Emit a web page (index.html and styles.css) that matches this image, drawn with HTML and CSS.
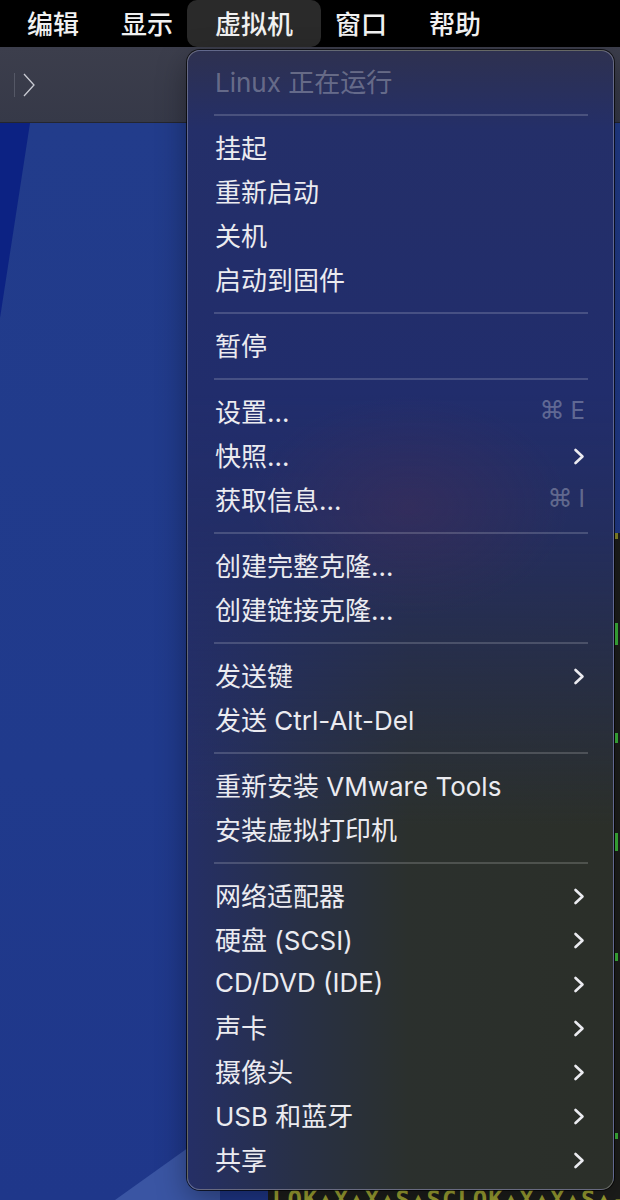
FILE: index.html
```html
<!DOCTYPE html>
<html lang="zh-CN">
<head>
  <meta charset="UTF-8" />
  <meta name="viewport" content="width=device-width, initial-scale=1.0"/>
  <title>虚拟机菜单</title>
  <link rel="stylesheet" href="styles.css">
</head>
<body>

  <div class="menubar">
    <div class="menubar-item">编辑</div>
    <div class="menubar-item">显示</div>
    <div class="menubar-item active">虚拟机</div>
    <div class="menubar-item">窗口</div>
    <div class="menubar-item">帮助</div>
  </div>

  <div class="toolbar">
    <span class="toolbar-divider"></span>
    <svg class="toolbar-chevron" width="14" height="26" viewBox="0 0 14 26">
      <path d="M2 2 L12 13 L2 24" fill="none" stroke="#c9cbd3" stroke-width="1.3"/>
    </svg>
  </div>

  <div class="desktop">
    <div class="wall-shade"></div>
    <div class="wall-light"></div>
    <div class="vm-screen">
      <div class="vm-mark" style="top: 0; height: 6px; background: #8a8a2a;"></div>
      <div class="vm-mark" style="top: 90px; height: 22px;"></div>
      <div class="vm-mark" style="top: 200px; height: 10px;"></div>
      <div class="vm-mark" style="top: 300px; height: 18px;"></div>
      <div class="vm-mark" style="top: 420px; height: 8px;"></div>
      <div class="vm-mark" style="top: 600px; height: 6px;"></div>
      <div class="vm-bottom">LOK▲X▲X▲S▲SCLOK▲X▲X▲S▲-PE</div>
    </div>
  </div>

  <!-- dropdown for 虚拟机 -->
  <div class="menu">
    <div class="menu-row disabled">Linux 正在运行</div>
    <div class="menu-sep"></div>
    <div class="menu-row">挂起</div>
    <div class="menu-row">重新启动</div>
    <div class="menu-row">关机</div>
    <div class="menu-row">启动到固件</div>
    <div class="menu-sep"></div>
    <div class="menu-row">暂停</div>
    <div class="menu-sep"></div>
    <div class="menu-row">设置…<span class="shortcut"><span class="cmd">⌘</span>E</span></div>
    <div class="menu-row">快照…<svg class="sub" width="12" height="17" viewBox="0 0 12 17"><path d="M2.5 2 L9.5 8.5 L2.5 15"/></svg></div>
    <div class="menu-row">获取信息…<span class="shortcut"><span class="cmd">⌘</span>I</span></div>
    <div class="menu-sep"></div>
    <div class="menu-row">创建完整克隆…</div>
    <div class="menu-row">创建链接克隆…</div>
    <div class="menu-sep"></div>
    <div class="menu-row">发送键<svg class="sub" width="12" height="17" viewBox="0 0 12 17"><path d="M2.5 2 L9.5 8.5 L2.5 15"/></svg></div>
    <div class="menu-row">发送 Ctrl-Alt-Del</div>
    <div class="menu-sep"></div>
    <div class="menu-row">重新安装 VMware Tools</div>
    <div class="menu-row">安装虚拟打印机</div>
    <div class="menu-sep"></div>
    <div class="menu-row">网络适配器<svg class="sub" width="12" height="17" viewBox="0 0 12 17"><path d="M2.5 2 L9.5 8.5 L2.5 15"/></svg></div>
    <div class="menu-row">硬盘 (SCSI)<svg class="sub" width="12" height="17" viewBox="0 0 12 17"><path d="M2.5 2 L9.5 8.5 L2.5 15"/></svg></div>
    <div class="menu-row">CD/DVD (IDE)<svg class="sub" width="12" height="17" viewBox="0 0 12 17"><path d="M2.5 2 L9.5 8.5 L2.5 15"/></svg></div>
    <div class="menu-row">声卡<svg class="sub" width="12" height="17" viewBox="0 0 12 17"><path d="M2.5 2 L9.5 8.5 L2.5 15"/></svg></div>
    <div class="menu-row">摄像头<svg class="sub" width="12" height="17" viewBox="0 0 12 17"><path d="M2.5 2 L9.5 8.5 L2.5 15"/></svg></div>
    <div class="menu-row">USB 和蓝牙<svg class="sub" width="12" height="17" viewBox="0 0 12 17"><path d="M2.5 2 L9.5 8.5 L2.5 15"/></svg></div>
    <div class="menu-row">共享<svg class="sub" width="12" height="17" viewBox="0 0 12 17"><path d="M2.5 2 L9.5 8.5 L2.5 15"/></svg></div>
  </div>

</body>
</html>
```

FILE: styles.css
```css
html, body {
  margin: 0;
  height: 100%;
}
body {
  width: 620px;
  height: 1200px;
  overflow: hidden;
  display: flex;
  flex-direction: column;
  font-family: Inter, "Noto Sans CJK SC", sans-serif;
  background: #213b8a;
  position: relative;
}

/* top menu bar */
.menubar {
  display: flex;
  height: 47px;
  padding-left: 6px;
  background: #000;
}
.menubar-item {
  display: flex;
  align-items: center;
  padding: 0 28px 3px;
  margin: 0 -7px;
  font-size: 26px;
  font-weight: 500;
  color: #f1f1f1;
  border-radius: 10px;
}
.menubar-item.active {
  background: #2a2a2a;
}

/* window toolbar */
.toolbar {
  height: 75px;
  display: flex;
  align-items: center;
  gap: 7px;
  padding-left: 14px;
  background: linear-gradient(#3c3e4c, #363948);
  border-bottom: 1px solid #24262f;
}
.toolbar-divider {
  width: 1px;
  height: 24px;
  background: #555866;
}

/* desktop behind */
.desktop {
  flex: 1;
  position: relative;
  background: linear-gradient(180deg, #223c8b, #203a8c 60%, #1f378a);
}
.wall-shade {
  position: absolute;
  left: 0;
  top: 0;
  width: 30px;
  height: 195px;
  background: #0c2283;
  clip-path: polygon(0 0, 100% 0, 0 100%);
}
.wall-light {
  position: absolute;
  left: 80px;
  bottom: 0;
  width: 140px;
  height: 75px;
  background: #3a55a3;
  clip-path: polygon(100% 0, 100% 100%, 25% 100%);
}
.vm-screen {
  position: absolute;
  left: 268px;
  top: 410px;
  right: 0;
  bottom: 0;
  background: #1d1e1c;
  overflow: hidden;
}
.vm-mark {
  position: absolute;
  right: 2px;
  width: 3px;
  background: #3cb43c;
}
.vm-bottom {
  position: absolute;
  left: 4px;
  bottom: -14px;
  font-family: "DejaVu Sans Mono", monospace;
  font-size: 24px;
  font-weight: bold;
  letter-spacing: 1px;
  color: #a3a834;
  white-space: nowrap;
}

/* dropdown menu */
.menu {
  position: absolute;
  left: 187px;
  top: 50px;
  width: 425px;
  padding: 9px 0 7px;
  border: 1px solid rgba(255, 255, 255, 0.28);
  border-radius: 13px;
  box-shadow: 0 0 0 1px rgba(0, 0, 0, 0.7), 0 10px 30px rgba(0, 0, 0, 0.35);
  background:
    radial-gradient(ellipse 160px 110px at 52% 40%, rgba(90, 45, 80, 0.28), transparent),
    linear-gradient(180deg, #2e3150 0%, #242f69 7%, #212d6c 30%, rgba(34, 45, 104, 0.85) 42%, rgba(34, 45, 104, 0) 68%),
    linear-gradient(90deg, #252f66 0%, #283046 26%, #2b302d 52%, #2b2f29 100%);
}
.menu-row {
  box-sizing: border-box;
  height: 44px;
  display: flex;
  align-items: center;
  justify-content: space-between;
  padding: 0 28px 4px 27px;
  font-size: 26px;
  color: #ebebf0;
  white-space: nowrap;
}
.menu-row.disabled {
  color: rgba(255, 255, 255, 0.3);
}
.menu-sep {
  height: 2px;
  margin: 10px 25px 10px 26px;
  background: rgba(255, 255, 255, 0.17);
}
.shortcut {
  display: flex;
  align-items: center;
  gap: 6px;
  font-size: 24px;
  color: rgba(255, 255, 255, 0.3);
}
.cmd {
  font-family: "DejaVu Sans", sans-serif;
  font-size: 25px;
}
.sub {
  margin-top: 4px;
}
.sub path {
  fill: none;
  stroke: #ebebf0;
  stroke-width: 2.6;
  stroke-linecap: round;
  stroke-linejoin: round;
}
```
